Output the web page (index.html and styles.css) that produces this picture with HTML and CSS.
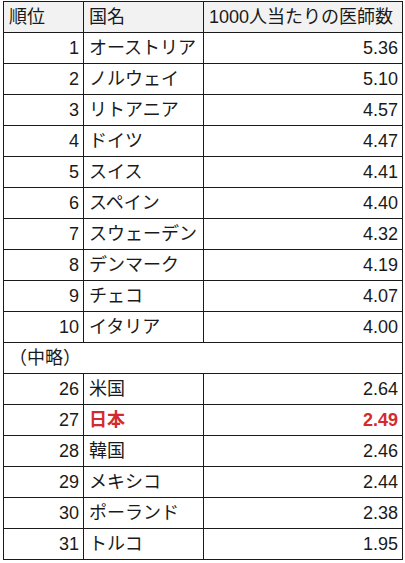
FILE: index.html
```html
<!DOCTYPE html>
<html lang="ja">
<head>
<meta charset="utf-8">
<link rel="stylesheet" href="styles.css">
</head>
<body>
<table class="rank">
  <colgroup><col class="c1"><col class="c2"><col class="c3"></colgroup>
  <thead>
    <tr><th class="l">順位</th><th class="l">国名</th><th class="l">1000人当たりの医師数</th></tr>
  </thead>
  <tbody>
    <tr><td class="r">1</td><td>オーストリア</td><td class="r">5.36</td></tr>
    <tr><td class="r">2</td><td>ノルウェイ</td><td class="r">5.10</td></tr>
    <tr><td class="r">3</td><td>リトアニア</td><td class="r">4.57</td></tr>
    <tr><td class="r">4</td><td>ドイツ</td><td class="r">4.47</td></tr>
    <tr><td class="r">5</td><td>スイス</td><td class="r">4.41</td></tr>
    <tr><td class="r">6</td><td>スペイン</td><td class="r">4.40</td></tr>
    <tr><td class="r">7</td><td>スウェーデン</td><td class="r">4.32</td></tr>
    <tr><td class="r">8</td><td>デンマーク</td><td class="r">4.19</td></tr>
    <tr><td class="r">9</td><td>チェコ</td><td class="r">4.07</td></tr>
    <tr><td class="r">10</td><td>イタリア</td><td class="r">4.00</td></tr>
    <tr><td colspan="3" class="omit">（中略）</td></tr>
    <tr><td class="r">26</td><td>米国</td><td class="r">2.64</td></tr>
    <tr class="jp"><td class="r">27</td><td>日本</td><td class="r">2.49</td></tr>
    <tr><td class="r">28</td><td>韓国</td><td class="r">2.46</td></tr>
    <tr><td class="r">29</td><td>メキシコ</td><td class="r">2.44</td></tr>
    <tr><td class="r">30</td><td>ポーランド</td><td class="r">2.38</td></tr>
    <tr><td class="r">31</td><td>トルコ</td><td class="r">1.95</td></tr>
  </tbody>
</table>
</body>
</html>
```
FILE: styles.css
```css
html, body {
  margin: 0;
  padding: 0;
  background: #ffffff;
}
body {
  font-family: "Liberation Sans", "Noto Sans CJK JP", sans-serif;
  font-size: 18px;
  color: #1a1a1a;
}
.rank {
  margin: 1px 0 0 3px;
  border-collapse: collapse;
  table-layout: fixed;
  width: 399px;
  border: 1px solid #1a1a1a;
}
.c1 { width: 80px; }
.c2 { width: 120px; }
.c3 { width: 199px; }
.rank th, .rank td {
  border: 1px solid #1a1a1a;
  height: 31px;
  padding: 0 4px 0 5px;
  box-sizing: border-box;
  white-space: nowrap;
  line-height: 20px;
  vertical-align: middle;
}
.rank th {
  background: #f2f2f2;
  font-weight: normal;
}
.l { text-align: left; }
.r { text-align: right; }
.omit { padding-left: 4px; }
.jp td:nth-child(2), .jp td:nth-child(3) {
  color: #d42a2f;
  font-weight: bold;
}
```
